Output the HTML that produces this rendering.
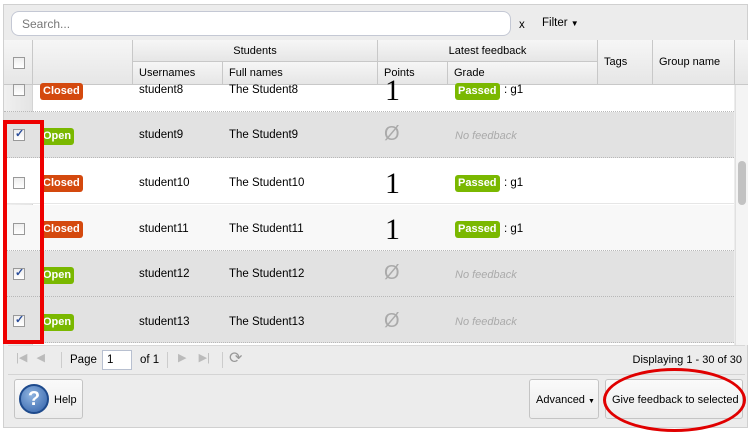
<!DOCTYPE html>
<html><head><meta charset="utf-8"><style>
*{box-sizing:border-box;margin:0;padding:0}
body{width:752px;height:436px;background:#fff;font-family:"Liberation Sans",sans-serif;font-size:11.5px;color:#000;position:relative;overflow:hidden;white-space:nowrap}
.a{position:absolute}
.panel{left:3px;top:4px;width:745px;height:424px;background:#ececec;border:1px solid #d0d0d0}
.hd{background:linear-gradient(#f6f6f6,#e6e6e6);border-right:1px solid #c8c8c8;border-bottom:1px solid #c8c8c8;font-size:11px;display:flex;align-items:center}
.row{left:4px;width:730px;height:46px;border-bottom:1px dotted #b8b8b8}
.cb{width:12px;height:12px;border:1px solid #999;background:linear-gradient(#eee,#fff);position:absolute}
.chk::after{content:"✓";position:absolute;left:1px;top:-3px;font-size:11px;color:#2a4d9a;font-weight:bold}
.tag{position:absolute;color:#fff;font-weight:bold;font-size:11px;border-radius:3px;padding:2px 3px;line-height:13px}
.closed{background:#d4490e}.open{background:#7ab800}
.t{position:absolute;font-size:11.5px}
.one{position:absolute;font-family:"Liberation Serif",serif;font-size:30px;line-height:30px}
.nf{position:absolute;color:#aaa;font-style:italic;font-size:11px}
.null{position:absolute;color:#aaa;font-size:20px}
.btn{background:linear-gradient(#fafafa,#ececec);border:1px solid #c4c4c4;border-radius:3px}
</style></head><body>
<div class="a panel"></div>
<div class="a" style="left:11px;top:11px;width:500px;height:25px;border:1px solid #c4c8d4;border-radius:8px;background:#fff"></div>
<div class="a" style="left:22px;top:17px;color:#777;font-size:12px">Search...</div>
<div class="a" style="left:519px;top:19px;font-size:11.5px">x</div>
<div class="a" style="left:542px;top:17px;font-size:11.5px">Filter <span style="font-size:8px">▼</span></div>
<div class="a hd" style="left:4px;top:40px;width:29px;height:45px"></div>
<div class="a cb" style="left:13px;top:57px"></div>
<div class="a hd" style="left:33px;top:40px;width:100px;height:45px"></div>
<div class="a hd" style="left:133px;top:40px;width:245px;height:22px;justify-content:center">Students</div>
<div class="a hd" style="left:133px;top:62px;width:90px;height:23px;padding-left:6px">Usernames</div>
<div class="a hd" style="left:223px;top:62px;width:155px;height:23px;padding-left:6px">Full names</div>
<div class="a hd" style="left:378px;top:40px;width:220px;height:22px;justify-content:center">Latest feedback</div>
<div class="a hd" style="left:378px;top:62px;width:70px;height:23px;padding-left:6px">Points</div>
<div class="a hd" style="left:448px;top:62px;width:150px;height:23px;padding-left:6px">Grade</div>
<div class="a hd" style="left:598px;top:40px;width:55px;height:45px;padding-left:6px">Tags</div>
<div class="a hd" style="left:653px;top:40px;width:82px;height:45px;padding-left:6px">Group name</div>
<div class="a hd" style="left:735px;top:40px;width:13px;height:45px;border-right:0"></div>
<div class="a" style="left:4px;top:85px;width:730px;height:260px;background:#fff;overflow:hidden">
 <div class="a" style="left:0;top:0;width:29px;height:260px;background:linear-gradient(90deg,#f0f0f0,#e4e4e4);border-right:1px solid #d4d4d4"></div>
 <div class="a row" style="left:0;top:-19px;background:transparent"></div>
 <div class="a row" style="left:0;top:27px;background:#e2e2e2"></div>
 <div class="a row" style="left:0;top:73px;background:#fff;border-bottom:1px solid #e6e6e6"></div>
 <div class="a row" style="left:0;top:120px;background:#f8f8f8"></div>
 <div class="a row" style="left:0;top:166px;background:#e2e2e2"></div>
 <div class="a row" style="left:0;top:212px;background:#e2e2e2"></div>
</div>
<div class="a" style="left:0;top:0;width:752px;height:436px">
 <div class="cb" style="left:13px;top:84px"></div>
 <div class="tag closed" style="left:40px;top:83px">Closed</div>
 <div class="t" style="left:139px;top:84px">student8</div>
 <div class="t" style="left:229px;top:84px">The Student8</div>
 <div class="one" style="left:385px;top:76px">1</div>
 <div class="tag open" style="left:455px;top:83px">Passed</div>
 <div class="t" style="left:504px;top:84px">: g1</div>

 <div class="cb chk" style="left:13px;top:129px"></div>
 <div class="tag open" style="left:40px;top:128px">Open</div>
 <div class="t" style="left:139px;top:129px">student9</div>
 <div class="t" style="left:229px;top:129px">The Student9</div>
 <div class="null" style="left:384px;top:123px">Ø</div>
 <div class="nf" style="left:455px;top:130px">No feedback</div>

 <div class="cb" style="left:13px;top:177px"></div>
 <div class="tag closed" style="left:40px;top:175px">Closed</div>
 <div class="t" style="left:139px;top:177px">student10</div>
 <div class="t" style="left:229px;top:177px">The Student10</div>
 <div class="one" style="left:385px;top:169px">1</div>
 <div class="tag open" style="left:455px;top:175px">Passed</div>
 <div class="t" style="left:504px;top:177px">: g1</div>

 <div class="cb" style="left:13px;top:223px"></div>
 <div class="tag closed" style="left:40px;top:221px">Closed</div>
 <div class="t" style="left:139px;top:223px">student11</div>
 <div class="t" style="left:229px;top:223px">The Student11</div>
 <div class="one" style="left:385px;top:215px">1</div>
 <div class="tag open" style="left:455px;top:221px">Passed</div>
 <div class="t" style="left:504px;top:223px">: g1</div>

 <div class="cb chk" style="left:13px;top:268px"></div>
 <div class="tag open" style="left:40px;top:267px">Open</div>
 <div class="t" style="left:139px;top:268px">student12</div>
 <div class="t" style="left:229px;top:268px">The Student12</div>
 <div class="null" style="left:384px;top:262px">Ø</div>
 <div class="nf" style="left:455px;top:269px">No feedback</div>

 <div class="cb chk" style="left:13px;top:315px"></div>
 <div class="tag open" style="left:40px;top:314px">Open</div>
 <div class="t" style="left:139px;top:316px">student13</div>
 <div class="t" style="left:229px;top:316px">The Student13</div>
 <div class="null" style="left:384px;top:310px">Ø</div>
 <div class="nf" style="left:455px;top:316px">No feedback</div>
</div>
<div class="a" style="left:735px;top:85px;width:13px;height:260px;background:#f4f4f4;border-left:1px solid #e0e0e0"></div>
<div class="a" style="left:738px;top:161px;width:8px;height:44px;background:#c2c2c2;border-radius:4px"></div>
<div class="a" style="left:8px;top:345px;width:737px;height:30px;border-bottom:1px solid #d4d4d4;border-top:1px solid #d8d8d8"></div>
<div class="a" style="left:16px;top:351px;color:#bbb;font-size:11px">|◀&nbsp;&nbsp;&nbsp;◀</div>
<div class="a" style="left:61px;top:352px;width:1px;height:16px;background:#ccc"></div>
<div class="a" style="left:70px;top:354px">Page</div>
<div class="a" style="left:102px;top:350px;width:30px;height:20px;border:1px solid #b8c0d0;background:#fff;padding:3px 4px">1</div>
<div class="a" style="left:140px;top:354px">of 1</div>
<div class="a" style="left:167px;top:352px;width:1px;height:16px;background:#ccc"></div>
<div class="a" style="left:178px;top:351px;color:#bbb;font-size:11px">▶&nbsp;&nbsp;&nbsp;&nbsp;▶|</div>
<div class="a" style="left:222px;top:352px;width:1px;height:16px;background:#ccc"></div>
<div class="a" style="left:229px;top:348px;color:#999;font-size:16px">⟳</div>
<div class="a" style="right:10px;top:354px;font-size:11px">Displaying 1 - 30 of 30</div>
<div class="a btn" style="left:14px;top:379px;width:69px;height:40px"></div>
<div class="a" style="left:19px;top:384px;width:30px;height:30px;border-radius:50%;background:radial-gradient(circle at 40% 35%,#8fb4e0,#2f5fa8);border:2px solid #1e4a8c;color:#fff;font-weight:bold;font-size:20px;text-align:center;line-height:26px">?</div>
<div class="a" style="left:54px;top:394px;font-size:11px">Help</div>
<div class="a btn" style="left:529px;top:379px;width:70px;height:40px"></div>
<div class="a" style="left:536px;top:394px;font-size:11px">Advanced <span style="font-size:7px">▼</span></div>
<div class="a btn" style="left:605px;top:379px;width:138px;height:40px"></div>
<div class="a" style="left:612px;top:394px;font-size:11px">Give feedback to selected</div>
<div class="a" style="left:3px;top:120px;width:41px;height:224px;border:4px solid #ee0000"></div>
<div class="a" style="left:603px;top:368px;width:143px;height:64px;border:3px solid #e00000;border-radius:50%"></div>
</body></html>
